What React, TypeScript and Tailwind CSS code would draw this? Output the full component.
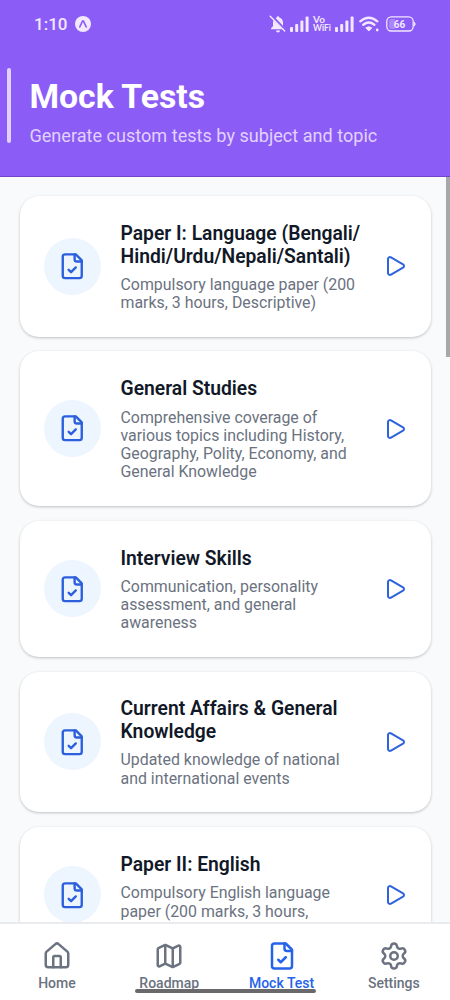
import React from "react";
import { House, Map as MapIcon, Play, Settings } from "lucide-react";

const tests = [
  { title: ["Paper I: Language (Bengali/", "Hindi/Urdu/Nepali/Santali)"], text: ["Compulsory language paper (200", "marks, 3 hours, Descriptive)"], height: "h-[140.5px]" },
  { title: ["General Studies"], text: ["Comprehensive coverage of", "various topics including History,", "Geography, Polity, Economy, and", "General Knowledge"], height: "h-[155px]" },
  { title: ["Interview Skills"], text: ["Communication, personality", "assessment, and general", "awareness"], height: "h-[136.5px]" },
  { title: ["Current Affairs & General", "Knowledge"], text: ["Updated knowledge of national", "and international events"], height: "h-[140.5px]" },
  { title: ["Paper II: English"], text: ["Compulsory English language", "paper (200 marks, 3 hours,"], height: "h-[136.5px]", extra: "pb-[17.3px]" },
];

function FileCheck({ className }: { className?: string }) {
  return (
    <svg viewBox="0 0 24 24" fill="none" stroke="currentColor" strokeWidth="2" strokeLinecap="round" strokeLinejoin="round" className={className}>
      <path d="M15 2H6a2 2 0 0 0-2 2v16a2 2 0 0 0 2 2h12a2 2 0 0 0 2-2V7Z" />
      <path d="M14 2v4a2 2 0 0 0 2 2h4" />
      <path d="m9 15 2 2 4-4" />
    </svg>
  );
}

function Signal() {
  return (
    <svg viewBox="0 0 19 16" className="h-4 w-[19px]" fill="currentColor">
      <rect x="0" y="11" width="3" height="5" rx="1" />
      <rect x="5.2" y="8" width="3" height="8" rx="1" />
      <rect x="10.4" y="4.5" width="3" height="11.5" rx="1" />
      <rect x="15.6" y="0.5" width="3" height="15.5" rx="1" />
    </svg>
  );
}

function StatusBar() {
  return (
    <div className="flex h-12 items-center pl-[34px] pr-[34px] text-[#f3e8ff]">
      <span className="w-[40.5px] text-[17px] font-medium leading-5">1:10</span>
      <svg viewBox="0 0 16 16" className="size-4">
        <circle cx="8" cy="8" r="8" fill="currentColor" />
        <path d="M4.8 10.9 7.5 5.1Q8 4.3 8.5 5.1l2.7 5.8" fill="none" stroke="#8b5cf6" strokeWidth="1.6" strokeLinecap="round" strokeLinejoin="round" />
      </svg>
      <div className="ml-auto flex items-center">
        <svg viewBox="0 0 18 18" className="mr-[3px] size-[18px]">
          <path d="M9 1.2a1.3 1.3 0 0 1 1.3 1.2c2.3.6 3.7 2.5 3.7 5v3.8l2 2v1H2v-1l2-2V7.4c0-2.5 1.4-4.4 3.7-5A1.3 1.3 0 0 1 9 1.2M7 15.4h4a2 2 0 0 1-4 0" fill="currentColor" />
          <path d="m2.5 1 14.5 15" stroke="#8b5cf6" strokeWidth="3" />
          <path d="M1.2 1.3 15.7 16" stroke="currentColor" strokeWidth="1.4" strokeLinecap="round" />
        </svg>
        <Signal />
        <div className="ml-[4px] mr-[3px] flex w-[19px] flex-col whitespace-nowrap font-[Lato] font-bold">
          <span className="text-[10px] leading-[9px]">Vo</span>
          <span className="text-[8.5px] leading-[9px]">WiFi</span>
        </div>
        <Signal />
        <svg viewBox="0 0 20 16" className="ml-[5px] mr-[7px] h-4 w-5">
          <path d="M1.3 5.3Q9.8-1.9 18.3 5.3M4.3 8.7q5.5-4.2 11 0" fill="none" stroke="currentColor" strokeWidth="2.4" strokeLinecap="round" />
          <path d="M6.8 11.8q3-2 6 0l-3 3.2z" fill="currentColor" stroke="currentColor" strokeWidth="1" strokeLinejoin="round" />
          <circle cx="18.2" cy="14" r="1.4" fill="currentColor" />
        </svg>
        <svg viewBox="0 0 30 16" className="h-4 w-[30px]">
          <rect x=".8" y=".8" width="26.4" height="14.2" rx="4.5" fill="none" stroke="currentColor" strokeWidth="1.3" />
          <path d="M5 3h4v10H5a2 2 0 0 1-2-2V5a2 2 0 0 1 2-2" fill="currentColor" opacity=".3" />
          <path d="M28 5.5q3.2 2.5 0 5z" fill="currentColor" />
          <text x="13.5" y="11.5" textAnchor="middle" fontFamily="Roboto" fontSize="10" fontWeight="700" fill="currentColor">66</text>
        </svg>
      </div>
    </div>
  );
}

export default function App() {
  const tab = "flex w-[112.5px] flex-col items-center text-[14px] font-medium leading-4";
  return (
    <div className="relative flex h-[1000px] w-[450px] flex-col overflow-hidden bg-[#f9fafb] font-[Roboto,sans-serif]">
      <header className="h-[177px] shrink-0 border-b border-[#7147c9] bg-[#8b5cf6]">
        <StatusBar />
        <div className="ml-[7px] mt-5 flex h-[75px]">
          <div className="w-[4px] rounded-full bg-[#e2d2ff]" />
          <div className="ml-[18.4px] whitespace-nowrap">
            <h1 className="pt-[8px] text-[33.8px] font-bold leading-[42px] text-white"><span>Mock Tests</span></h1>
            <p className="mt-[7px] text-[18.1px] leading-[22px] text-[#e2d2ff]"><span>Generate custom tests by subject and topic</span></p>
          </div>
        </div>
      </header>
      <div className="flex min-h-0 flex-1 overflow-hidden">
        <main className="flex w-[445px] shrink-0 flex-col gap-[14.5px] pl-5 pr-[14px] pt-[19px]">
          {tests.map((t) => (
            <article key={t.title[0]} className={`flex w-[411px] shrink-0 items-center rounded-[19px] bg-white pl-6 shadow-[0_1px_3px_rgba(0,0,0,0.23)] ${t.height}`}>
              <div className="flex size-[57px] shrink-0 items-center justify-center rounded-full bg-[#edf5ff] text-[#2b5fdc]">
                <FileCheck className="size-[28.5px]" />
              </div>
              <div className={`ml-[19.5px] w-[262px] whitespace-nowrap pt-[3px] ${t.extra ?? ""}`}>
                <h2 className="text-[19.3px] font-semibold leading-[22.8px] text-[#111827]">
                  {t.title.map((line) => <span className="block" key={line}>{line}</span>)}
                </h2>
                <p className="pt-[7.4px] text-[15.9px] leading-[18.3px] text-[#6b7280]">
                  {t.text.map((line) => <span className="block" key={line}>{line}</span>)}
                </p>
              </div>
              <Play className="size-6 shrink-0 text-[#2f62df]" />
            </article>
          ))}
        </main>
        <div className="ml-[0.5px] h-[180px] w-[4.5px] bg-[#a8a8aa]" />
      </div>
      <nav className="flex h-[78px] shrink-0 border-t-2 border-[#e9ebee] bg-white pl-[0.8px] pt-[17px] text-[#6b7280]">
        <div className={tab}><House className="mb-[4.4px] size-[30px]" /><span>Home</span></div>
        <div className={tab}><MapIcon className="mb-[4.4px] size-[30px]" /><span>Roadmap</span></div>
        <div className={`${tab} text-[#2563eb]`}><FileCheck className="mb-[4.4px] size-[30px]" /><span>Mock Test</span></div>
        <div className={tab}><Settings className="mb-[4.4px] size-[30px]" /><span>Settings</span></div>
      </nav>
      <div className="absolute left-[135px] top-[989px] h-[4px] w-[181px] rounded-full bg-[#69696b]" />
    </div>
  );
}
